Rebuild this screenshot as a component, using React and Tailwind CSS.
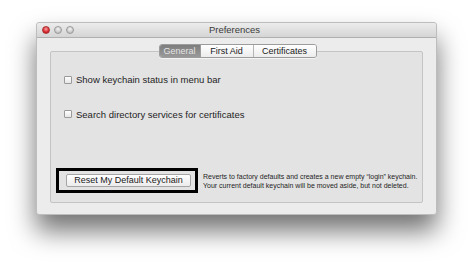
export default function App() {
  const font = { fontFamily: '"Liberation Sans", Arial, sans-serif' };

  return (
    <div className="w-[474px] h-[267px] bg-white pt-[22px] pl-[36px] overflow-hidden" style={font}>
      {/* Window */}
      <div className="w-[401px] h-[193px] bg-[#ececec] rounded-[3px] border border-[#bdbdbd] shadow-[0_16px_26px_rgba(0,0,0,0.55)] flex flex-col">
        {/* Title bar */}
        <div className="h-[15px] bg-gradient-to-b from-[#ececec] to-[#d5d5d5] border-b border-[#b0b0b0] rounded-t-[3px] flex items-center px-[5px] relative">
          <div className="flex gap-[4px]">
            <span className="w-[8px] h-[8px] rounded-full bg-[radial-gradient(circle_at_50%_35%,#f7a3a3,#d8262c_60%,#a0181c)] border border-[#a33]" />
            <span className="w-[8px] h-[8px] rounded-full bg-[radial-gradient(circle_at_50%_35%,#f4f4f4,#c3c3c3_70%)] border border-[#9a9a9a]" />
            <span className="w-[8px] h-[8px] rounded-full bg-[radial-gradient(circle_at_50%_35%,#f4f4f4,#c3c3c3_70%)] border border-[#9a9a9a]" />
          </div>
          <div className="flex-1 text-center text-[9.5px] text-[#3a3a3a] pr-[36px] leading-none">Preferences</div>
        </div>

        {/* Content */}
        <div className="flex-1 px-[13px] pt-[13px] pb-[11px]">
          <div className="h-full bg-[#e3e3e3] border border-[#c4c4c4] rounded-[2px] flex flex-col">
            {/* Tabs */}
            <div className="flex justify-center -mt-[8px] pl-[2px]">
              <div className="flex h-[14px] border border-[#9c9c9c] rounded-[3px] overflow-hidden text-[9px] leading-none shadow-[0_1px_0_rgba(255,255,255,0.6)]">
                <div className="w-[40px] flex items-center justify-center bg-gradient-to-b from-[#7d7d7d] to-[#9a9a9a] text-[#e4e4e4]">General</div>
                <div className="w-[53px] flex items-center justify-center bg-gradient-to-b from-[#ffffff] to-[#ececec] text-[#1a1a1a] border-l border-[#9c9c9c]">First Aid</div>
                <div className="w-[63px] flex items-center justify-center bg-gradient-to-b from-[#ffffff] to-[#ececec] text-[#1a1a1a] border-l border-[#b5b5b5]">Certificates</div>
              </div>
            </div>

            {/* Options */}
            <div className="flex flex-col gap-[25px] pl-[13px] pt-[17px] text-[9.5px] text-[#1e1e1e] leading-none">
              <label className="flex items-center gap-[4px]">
                <span className="w-[8px] h-[8px] bg-gradient-to-b from-white to-[#e6e6e6] border border-[#9a9a9a] rounded-[1px]" />
                Show keychain status in menu bar
              </label>
              <label className="flex items-center gap-[4px]">
                <span className="w-[8px] h-[8px] bg-gradient-to-b from-white to-[#e6e6e6] border border-[#9a9a9a] rounded-[1px]" />
                Search directory services for certificates
              </label>
            </div>

            {/* Reset */}
            <div className="mt-auto mb-[9px] flex items-center pl-[5px]">
              <div className="w-[142px] h-[25px] border-[3px] border-black flex items-center pl-[7px]">
                <div className="w-[125px] h-[13px] bg-gradient-to-b from-white to-[#ececec] border border-[#a5a5a5] rounded-[2px] flex items-center justify-center text-[9px] text-[#1a1a1a] leading-none">
                  Reset My Default Keychain
                </div>
              </div>
              <div className="pl-[5px] text-[7px] leading-[9px] text-[#1e1e1e]">
                <div>Reverts to factory defaults and creates a new empty “login” keychain.</div>
                <div>Your current default keychain will be moved aside, but not deleted.</div>
              </div>
            </div>
          </div>
        </div>
      </div>
    </div>
  );
}
